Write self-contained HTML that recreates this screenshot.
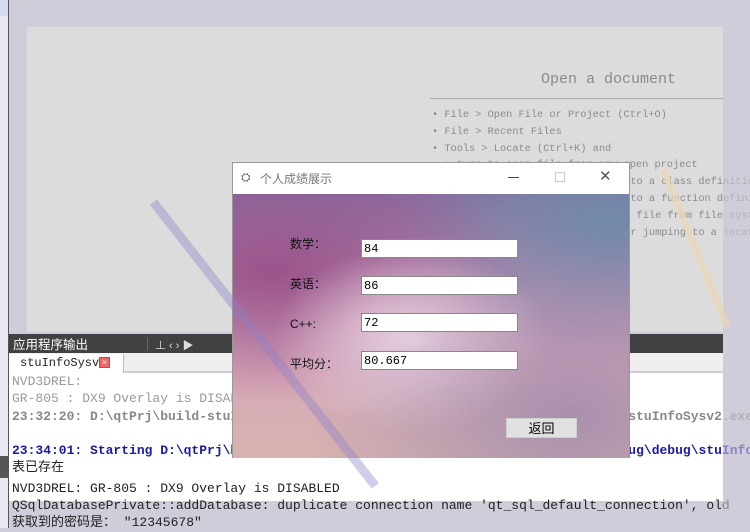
<!DOCTYPE html>
<html><head><meta charset="utf-8"><style>
*{margin:0;padding:0;box-sizing:border-box}
body{width:750px;height:528px;overflow:hidden;background:#d0ccd9;position:relative;font-family:"Liberation Sans","Noto Sans CJK SC",sans-serif}
.abs{position:absolute}
.mono{font-family:"Liberation Mono","Noto Sans CJK SC",monospace;font-size:13px;white-space:nowrap}
.cjk{font-family:"Noto Sans CJK SC","WenQuanYi Zen Hei",sans-serif}
.ln{height:17.3px;line-height:17.3px;overflow:hidden}
</style></head><body>
<div class="abs" style="left:0;top:0;width:8px;height:528px;background:#ebe7f3"></div>
<div class="abs" style="left:0;top:0;width:8px;height:16px;background:#d3def5"></div>
<div class="abs" style="left:8px;top:0;width:1px;height:528px;background:#555"></div>
<div class="abs" style="left:0;top:456px;width:8px;height:22px;background:#555"></div>
<div class="abs" style="left:27px;top:27px;width:696px;height:305px;background:#dcdcdc"></div>
<div class="abs" style="left:430px;top:98px;width:293px;height:1px;background:#aaa"></div>
<div class="abs" style="left:541px;top:71px;color:#8a8a8a;font-family:'Liberation Mono',monospace;font-size:15px">Open a document</div>
<div class="abs" style="left:0;top:0;width:750px;height:240px;overflow:hidden">
<div class="abs" style="left:432px;top:107px;color:#8a8a8a;font-family:'Liberation Mono',monospace;font-size:10.3px;line-height:16.8px;white-space:nowrap">
• File &gt; Open File or Project (Ctrl+O)<br>• File &gt; Recent Files<br>• Tools &gt; Locate (Ctrl+K) and<br>&nbsp;&nbsp;= type to open file from any open project<br>
<span style="padding-left:186px">p to a class definitio</span><br><span style="padding-left:186px">p to a function defini</span><br><span style="padding-left:186px">en file from file syst</span><br><span style="padding-left:186px">for jumping to a locat</span></div></div>
<div class="abs" style="left:9px;top:334px;width:714px;height:19px;background:#404142"></div>
<div class="abs cjk" style="left:13px;top:335px;color:#fff;font-size:12.5px;line-height:17px">应用程序输出</div>
<div class="abs" style="left:147px;top:337px;width:1px;height:14px;background:#666"></div>
<div class="abs" style="left:155px;top:337px;color:#ddd;font-size:11px">⊥ ‹ › ▶</div>
<div class="abs" style="left:9px;top:353px;width:714px;height:19px;background:#efefef;border-bottom:1px solid #ccc"></div>
<div class="abs" style="left:9px;top:354px;width:115px;height:19px;background:#fff;border-right:1px solid #bbb"></div>
<div class="abs mono" style="left:20px;top:356px;font-size:12px;color:#222">stuInfoSysv2</div>
<div class="abs" style="left:99px;top:357px;width:11px;height:11px;background:#e66;border:1px solid #c44;color:#fff;font-size:9px;line-height:9px;text-align:center">×</div>
<div class="abs" style="left:9px;top:373px;width:714px;height:128px;background:#fff"></div>
<div class="abs mono" style="left:12px;top:373px;width:738px;overflow:hidden">
<div class="ln" style="color:#999">NVD3DREL:</div>
<div class="ln" style="color:#999">GR-805 : DX9 Overlay is DISABLED</div>
<div class="ln" style="color:#888;font-weight:bold">23:32:20: D:\qtPrj\build-stuInfoSysv2-Desktop_Qt_5_9_0_MinGW_32bit-Debug\debug\stuInfoSysv2.exe</div>
<div class="ln">&nbsp;</div>
<div class="ln" style="color:#1a1aa8;font-weight:bold">23:34:01: Starting D:\qtPrj\build-stuInfoSysv2-Desktop_Qt_5_9_0_MinGW_32bit-Debug\debug\stuInfoSysv2.exe</div>
<div class="ln" style="color:#222">表已存在</div>
<div class="ln" style="color:#222;margin-top:3px">NVD3DREL: GR-805 : DX9 Overlay is DISABLED</div>
<div class="ln" style="color:#222">QSqlDatabasePrivate::addDatabase: duplicate connection name 'qt_sql_default_connection', old</div>
<div class="ln" style="color:#222">获取到的密码是： "12345678"</div>
</div>
<div class="abs" style="left:723px;top:0;width:27px;height:528px;background:rgba(208,204,217,0.6)"></div>
<div class="abs" style="left:232px;top:162px;width:398px;height:296px;border:1px solid #999;background:#fff">
<div class="abs" style="left:0;top:0;width:396px;height:30px;background:#fff"></div>
<div class="abs" style="left:8px;top:7px;color:#666;font-size:12px">⛭</div>
<div class="abs cjk" style="left:27px;top:7px;color:#777;font-size:12px">个人成绩展示</div>
<div class="abs" style="left:275px;top:14px;width:11px;height:1px;background:#444"></div>
<div class="abs" style="left:322px;top:9px;width:10px;height:10px;border:1px solid #ccc"></div>
<div class="abs" style="left:366px;top:4px;color:#555;font-size:15px">✕</div>
<div class="abs" style="left:0;top:31px;width:396px;height:264px;background:
radial-gradient(ellipse at 85% 85%,rgba(150,130,170,.7),transparent 55%),
radial-gradient(ellipse at 45% 55%,rgba(245,225,235,.95),transparent 45%),
radial-gradient(ellipse at 10% 30%,rgba(150,70,130,.8),transparent 50%),
radial-gradient(ellipse at 95% 10%,rgba(110,140,170,.9),transparent 40%),
linear-gradient(180deg,#8a6f9f 0%,#b98fb2 35%,#d7aab8 70%,#d6b3b0 100%)"></div>
<div class="abs cjk" style="left:57px;top:72px;font-size:12px;color:#111">数学：</div>
<div class="abs cjk" style="left:57px;top:112px;font-size:12px;color:#111">英语：</div>
<div class="abs" style="left:57px;top:154px;font-size:12px;color:#111">C++:</div>
<div class="abs cjk" style="left:57px;top:192px;font-size:12px;color:#111">平均分：</div>
<div class="abs mono" style="left:128px;top:76px;width:157px;height:19px;background:#fff;border:1px solid #888;padding:2px 2px;font-size:12px">84</div>
<div class="abs mono" style="left:128px;top:113px;width:157px;height:19px;background:#fff;border:1px solid #888;padding:2px 2px;font-size:12px">86</div>
<div class="abs mono" style="left:128px;top:150px;width:157px;height:19px;background:#fff;border:1px solid #888;padding:2px 2px;font-size:12px">72</div>
<div class="abs mono" style="left:128px;top:188px;width:157px;height:19px;background:#fff;border:1px solid #888;padding:2px 2px;font-size:12px">80.667</div>
<div class="abs cjk" style="left:273px;top:255px;width:71px;height:20px;background:#e1e1e1;border:1px solid #cfcfcf;font-size:13px;text-align:center;line-height:18px">返回</div>
</div>
<div class="abs" style="left:150px;top:205px;width:9px;height:360px;background:rgba(140,130,200,.4);transform:rotate(-38deg);transform-origin:0 0"></div>
<div class="abs" style="left:660px;top:170px;width:7px;height:170px;background:rgba(235,215,180,.7);transform:rotate(-22deg);transform-origin:0 0"></div>
</body></html>
